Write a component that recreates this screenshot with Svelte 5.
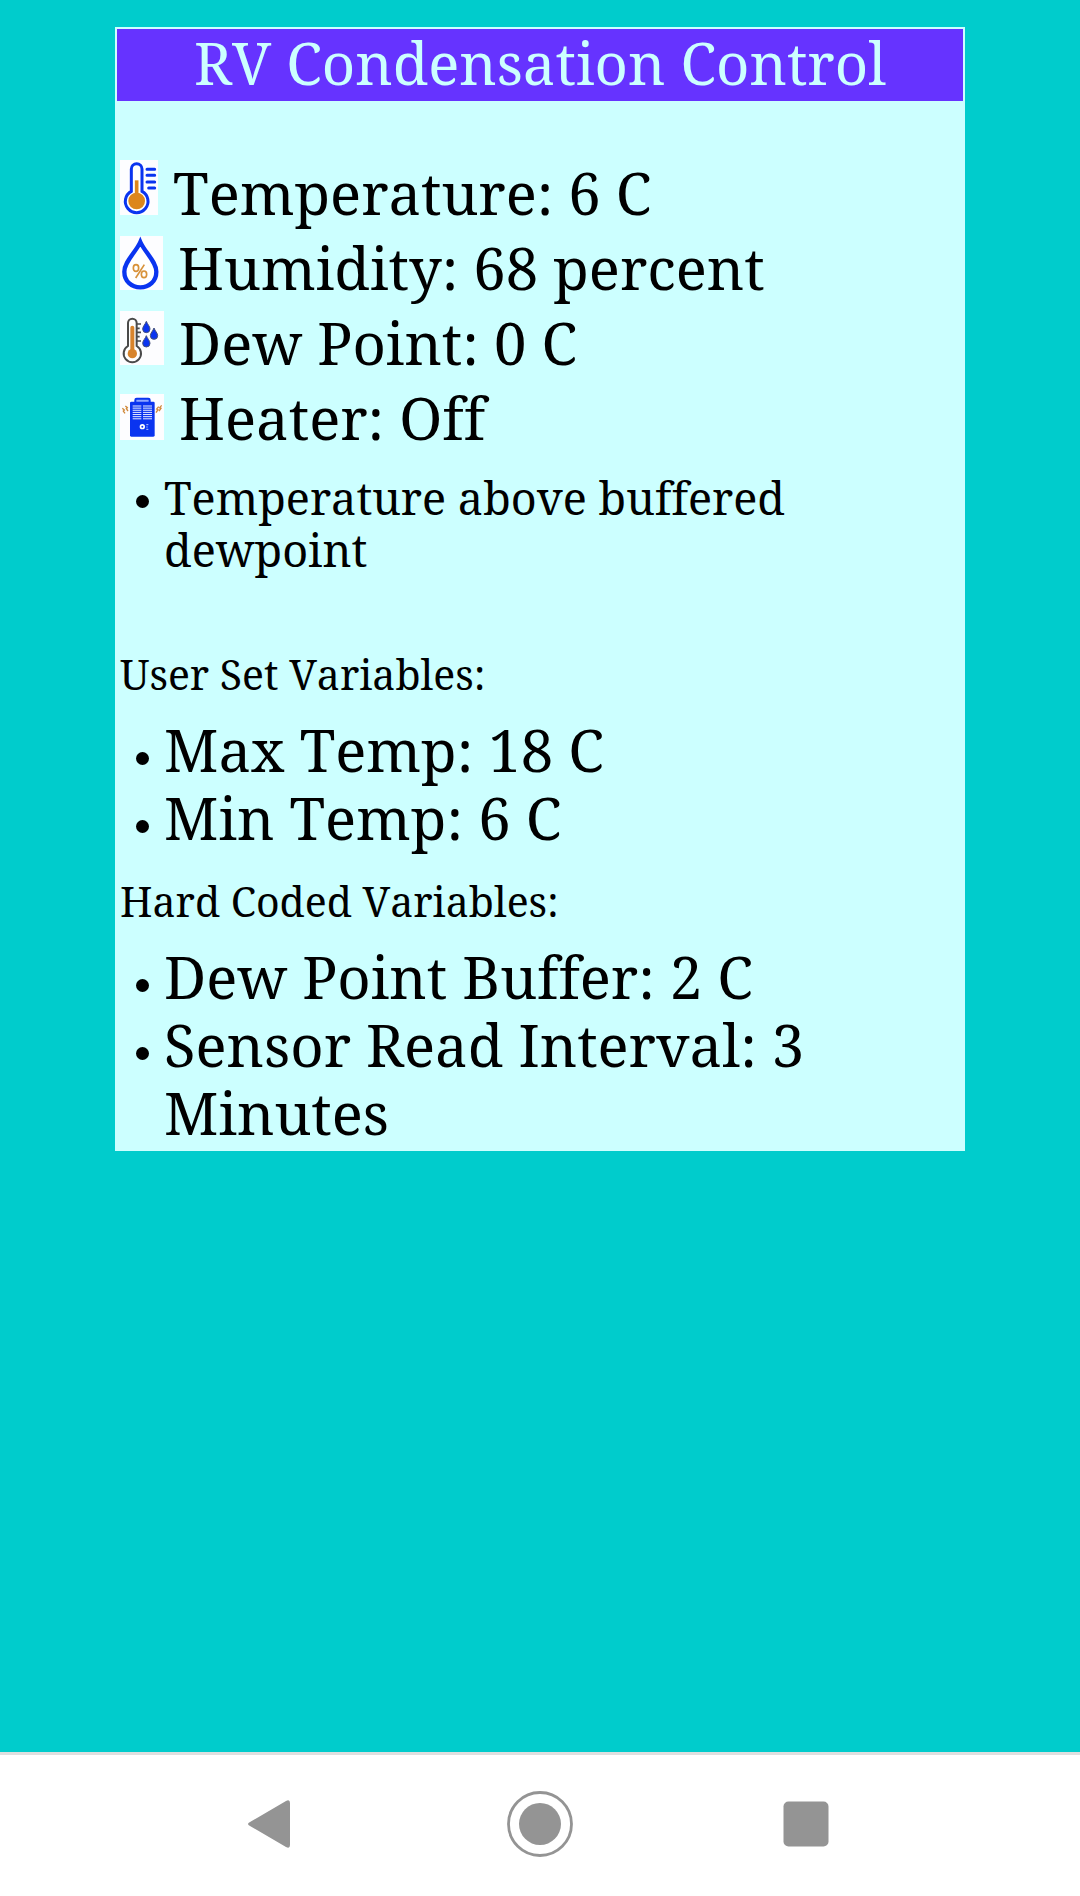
<script>
  const readings = [
    { icon: 'temperature', label: 'Temperature', value: '6 C' },
    { icon: 'humidity', label: 'Humidity', value: '68 percent' },
    { icon: 'dew', label: 'Dew Point', value: '0 C' },
    { icon: 'heater', label: 'Heater', value: 'Off' }
  ];
  const notes = ['Temperature above buffered dewpoint'];
  const userSet = ['Max Temp: 18 C', 'Min Temp: 6 C'];
  const hardCoded = ['Dew Point Buffer: 2 C', 'Sensor Read Interval: 3 Minutes'];
  const ventRows = [0, 1, 2, 3, 4, 5, 6];
</script>

<div class="page">
  <main>
    <section class="card">
      <h1>RV Condensation Control</h1>
      <div class="content">
        <div class="readings">
          {#each readings as r}
            <p>
              {#if r.icon === 'temperature'}
                <svg width="38" height="55" viewBox="0 0 114 165" aria-hidden="true">
                  <rect width="114" height="165" fill="#fdfdff" />
                  <path d="M34 94V27a16 16 0 0 1 32 0v67a34 34 0 1 1-32 0z" fill="#fff" stroke="#0a34f0" stroke-width="9" />
                  <circle cx="50" cy="123" r="25" fill="#dc861c" />
                  <path d="M50 123V61" stroke="#dc861c" stroke-width="11" />
                  <path d="M81 28h23M81 46h23M81 66h23M86 84h18" stroke="#0a34f0" stroke-width="9" stroke-linecap="round" />
                </svg>
              {:else if r.icon === 'humidity'}
                <svg width="43" height="54" viewBox="0 0 129 162" aria-hidden="true">
                  <rect width="129" height="162" fill="#fdfdff" />
                  <path d="M61 18C48 48 13 77 13 107c0 29 22 47 48 47s48-18 48-47c0-30-35-59-48-89z" fill="#fff" stroke="#0a34f0" stroke-width="13" />
                  <g fill="none" stroke="#d8923a" stroke-width="5">
                    <ellipse cx="48" cy="96" rx="8" ry="10" />
                    <ellipse cx="72" cy="115" rx="8" ry="10" />
                    <path d="M73 86 47 126" />
                  </g>
                </svg>
              {:else if r.icon === 'dew'}
                <svg width="44" height="54" viewBox="0 0 132 162" aria-hidden="true">
                  <rect width="132" height="162" fill="#fdfdff" />
                  <path d="M24 105V36a13 13 0 0 1 26 0v69a26 26 0 1 1-26 0z" fill="#fff" stroke="#4a4a4a" stroke-width="6" />
                  <path d="M37 128V50" stroke="#d8842c" stroke-width="12" stroke-linecap="round" />
                  <circle cx="37" cy="128" r="14" fill="#d8842c" />
                  <path d="M50 39h13M50 52h9M50 64h13M50 77h9M50 90h13" stroke="#4a4a4a" stroke-width="5" />
                  <g fill="#0a34f0" stroke="#45527c" stroke-width="3">
                    <path d="M79 31c-3 9-11 15-11 23a11 11 0 0 0 22 0c0-8-8-14-11-23z" />
                    <path d="M102 51c-3 9-11 15-11 23a11 11 0 0 0 22 0c0-8-8-14-11-23z" />
                    <path d="M79 74c-3 9-11 15-11 23a11 11 0 0 0 22 0c0-8-8-14-11-23z" />
                  </g>
                </svg>
              {:else}
                <svg width="44" height="46" viewBox="0 0 132 138" aria-hidden="true">
                  <rect width="132" height="138" fill="#fdfdff" />
                  <path d="M46 25v-7q0-4 4-4h35q4 0 4 4v7" fill="#8fa6ff" stroke="#0a34f0" stroke-width="6" />
                  <rect x="30" y="23" width="74" height="105" rx="4" fill="#0a34f0" />
                  {#each ventRows as i}
                    <path d="M38 {36 + i * 6.4}h26M69 {36 + i * 6.4}h27" stroke="#e8edff" stroke-width="3" />
                  {/each}
                  <circle cx="67" cy="98" r="8" fill="#fff" />
                  <circle cx="67" cy="98" r="3" fill="#0a34f0" />
                  <path d="M79 92h6M79 99h4M79 106h6" stroke="#b9c7ff" stroke-width="3" />
                  <path d="m7 43 6 5-3 3 5 7M16 36l6 5-3 3 5 7M125 34l-6 7 4 2-6 8M116 38l-6 7 4 2-6 9" fill="none" stroke="#d08a3c" stroke-width="4" />
                </svg>
              {/if}
              {r.label}: {r.value}
            </p>
          {/each}
        </div>
        <ul class="notes">
          {#each notes as n}<li>{n}</li>{/each}
        </ul>
        <h2>User Set Variables:</h2>
        <ul class="values">
          {#each userSet as v}<li>{v}</li>{/each}
        </ul>
        <h2 class="second">Hard Coded Variables:</h2>
        <ul class="values">
          {#each hardCoded as v}<li>{v}</li>{/each}
        </ul>
      </div>
    </section>
  </main>
  <nav aria-label="System">
    <button aria-label="Back">
      <svg width="66" height="66" viewBox="0 0 66 66"><path d="M13 31 49 10q4-2 4 2v42q0 4-4 2L13 35q-4-2 0-4z" fill="#949494" /></svg>
    </button>
    <button aria-label="Home">
      <svg width="66" height="66" viewBox="0 0 66 66"><circle cx="33" cy="33" r="31.5" fill="none" stroke="#949494" stroke-width="2.8" /><circle cx="33" cy="33" r="21" fill="#949494" /></svg>
    </button>
    <button aria-label="Recent apps">
      <svg width="66" height="66" viewBox="0 0 66 66"><rect x="6.5" y="10.5" width="45" height="45" rx="5" fill="#949494" /></svg>
    </button>
  </nav>
</div>

<style>
  :global(body) {
    margin: 0;
  }
  .page {
    display: flex;
    flex-direction: column;
    min-height: 100vh;
    background: #00cccc;
    color: #000;
    font-family: 'Noto Serif', 'DejaVu Serif Condensed', 'DejaVu Serif', serif;
    font-variant-ligatures: none;
    font-kerning: none;
  }
  main {
    flex: 1;
    padding: 27px 0;
  }
  .card {
    box-sizing: border-box;
    width: 78.7%;
    margin: 0 auto;
    padding: 2px;
    background: #ccffff;
  }
  h1 {
    margin: 0;
    padding-bottom: 4px;
    background: #6633ff;
    color: #ccffff;
    font-size: 58px;
    font-weight: 400;
    line-height: 68px;
    text-align: center;
  }
  .content {
    padding: 54px 3px 2px;
  }
  p {
    margin: 0;
    font-size: 58px;
    line-height: 75px;
  }
  p svg {
    vertical-align: baseline;
  }
  h2 {
    margin: 70px 0 14px;
    font-size: 41px;
    font-weight: 400;
    line-height: 56px;
  }
  h2.second {
    margin-top: 21px;
  }
  ul {
    margin: 0;
    padding: 0 0 0 44px;
    list-style: none;
  }
  li {
    text-indent: -28px;
  }
  li::before {
    content: '';
    display: inline-block;
    width: 13px;
    height: 13px;
    margin: 0 15px 7px 0;
    border-radius: 50%;
    background: #000;
  }
  .notes {
    margin-top: 17px;
    font-size: 45px;
    line-height: 52px;
  }
  .values {
    font-size: 58px;
    line-height: 68px;
  }
  nav {
    display: flex;
    justify-content: center;
    align-items: center;
    gap: 204px;
    height: 138px;
    padding-bottom: 3px;
    border-top: 3px solid #dfdfdf;
    background: #fff;
  }
  button {
    padding: 0;
    border: 0;
    background: none;
  }
  button svg {
    display: block;
  }
</style>
